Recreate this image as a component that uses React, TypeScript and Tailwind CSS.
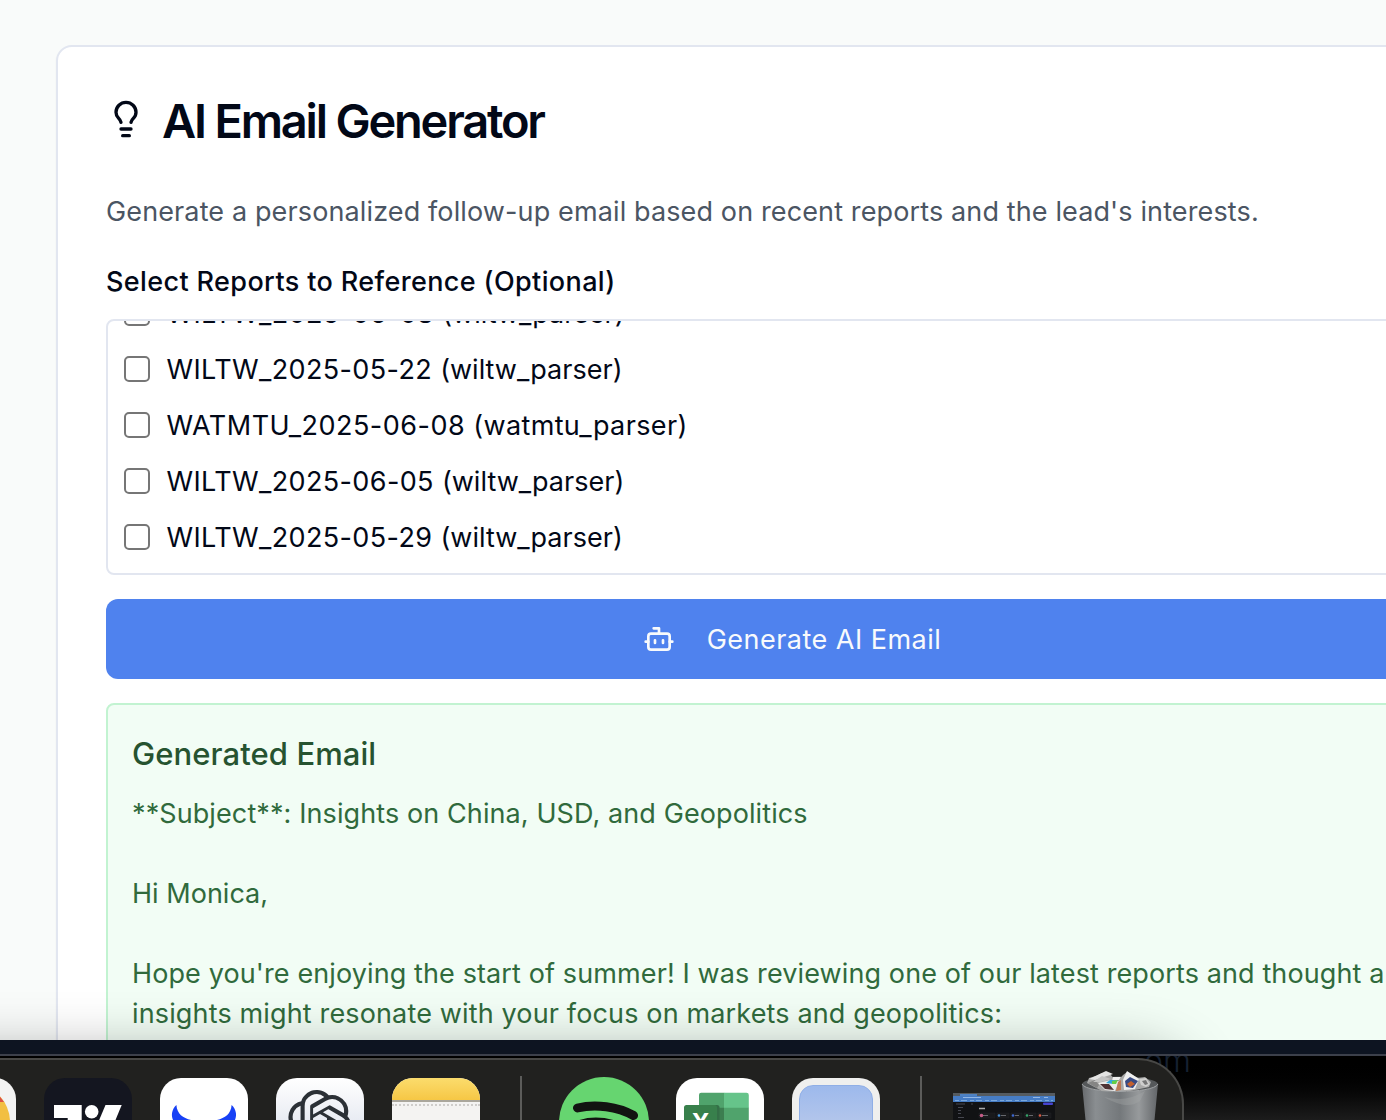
import type { ReactNode } from "react";
import { SiOpenai } from "react-icons/si";

const reports = [
  { name: "WILTW_2025-06-08", parser: "(wiltw_parser)", head: "tracking-[0.38px]", tail: "tracking-[0.02px]" },
  { name: "WILTW_2025-05-22", parser: "(wiltw_parser)", head: "tracking-[0.38px]", tail: "tracking-[0.02px]" },
  { name: "WATMTU_2025-06-08", parser: "(watmtu_parser)", head: "tracking-[0.48px]", tail: "tracking-[0.38px]" },
  { name: "WILTW_2025-06-05", parser: "(wiltw_parser)", head: "tracking-[0.38px]", tail: "tracking-[0.02px]" },
  { name: "WILTW_2025-05-29", parser: "(wiltw_parser)", head: "tracking-[0.38px]", tail: "tracking-[0.02px]" },
];

const emailLines = [
  { text: "**Subject**: Insights on China, USD, and Geopolitics", spacing: "tracking-[0.1px]" },
  { text: "", spacing: "" },
  { text: "Hi Monica,", spacing: "tracking-[0.02px]" },
  { text: "", spacing: "" },
  {
    text: "Hope you're enjoying the start of summer! I was reviewing one of our latest reports and thought a",
    spacing: "tracking-[0.11px]",
  },
  { text: "insights might resonate with your focus on markets and geopolitics:", spacing: "tracking-[0.145px]" },
];

function BulbIcon() {
  return (
    <svg width="40" height="40" viewBox="0 0 24 24" fill="none" stroke="currentColor" strokeWidth="2" strokeLinecap="round" strokeLinejoin="round" className="-mt-[2px] shrink-0">
      <path d="M15 14c.2-1 .7-1.7 1.5-2.5 1-.9 1.5-2.2 1.5-3.5A6 6 0 0 0 6 8c0 1 .2 2.2 1.5 3.5.7.7 1.3 1.5 1.5 2.5" />
      <path d="M9 18h6" />
      <path d="M10 22h4" />
    </svg>
  );
}

function BotIcon() {
  return (
    <svg width="32" height="32" viewBox="0 0 24 24" fill="none" stroke="currentColor" strokeWidth="2" strokeLinecap="round" strokeLinejoin="round" className="shrink-0">
      <path d="M12 8V4H8" />
      <rect width="16" height="12" x="4" y="8" rx="2" />
      <path d="M2 14h2M20 14h2M15 13v2M9 13v2" />
    </svg>
  );
}

function Tile({ className = "", children }: { className?: string; children?: ReactNode }) {
  return <div className={`h-[42px] w-[88px] shrink-0 overflow-hidden rounded-t-[21px] ${className}`}>{children}</div>;
}

function Separator({ className = "" }: { className?: string }) {
  return <div className={`h-[44px] w-[2px] shrink-0 bg-[#5c5c5a] ${className}`} />;
}

function Dock() {
  return (
    <div className="relative flex h-[62px] w-[1184px] items-end overflow-hidden rounded-tr-[46px] border-t-2 border-r-2 border-[#484846] bg-[#21211f]">
      <Tile className="-ml-[72px] bg-[#f3f3f2]">
        <svg width="88" height="42" viewBox="0 0 88 42">
          <circle cx="44" cy="44" r="38" fill="#f2bf42" />
          <path d="M44 6A38 38 0 0 1 76 24H44Z" fill="#dc5144" />
        </svg>
      </Tile>
      <Tile className="ml-[28px] bg-[#141620]">
        <svg width="88" height="42" viewBox="0 0 88 42" fill="#fff">
          <path d="M10 27h27.7v15h-14v-2H10z" />
          <circle cx="47.7" cy="33.7" r="6.8" />
          <path d="M61.5 27h16.2L71.5 42H55.2z" />
        </svg>
      </Tile>
      <Tile className="ml-[28px] bg-white">
        <svg width="88" height="42" viewBox="0 0 88 42" fill="#1841f5">
          <path d="M16.4 27C12 31 10.800 37 13 42H31C23 40 17 36 16.400 27Z" />
          <path d="M71.600 27C76 31 77.200 37 75 42H57C65 40 71 36 71.600 27Z" />
        </svg>
      </Tile>
      <Tile className="ml-[28px] bg-linear-to-b from-white to-[#e9ecf3]">
        <SiOpenai size={64} className="mt-[12px] ml-[12px] text-[#2b3036]" />
      </Tile>
      <Tile className="ml-[28px] bg-[#f4f3f2]">
        <div className="h-[22px] bg-linear-to-b from-[#fbdc6c] to-[#f6c744]" />
        <div className="h-[2px] bg-[#aaa69c]" />
        <div className="mt-[2px] border-t-2 border-dotted border-[#cfcdcb]" />
      </Tile>
      <Separator className="ml-[40px]" />
      <svg width="92" height="43" viewBox="0 0 92 43" fill="none" className="ml-[36px] shrink-0">
        <circle cx="46" cy="45" r="45" fill="#66d570" />
        <path d="M19.500 31C37 26.500 60 29.500 75.500 38.500" stroke="#121411" strokeWidth="9" strokeLinecap="round" />
        <path d="M22 47C36 42.500 51 44 68 52" stroke="#121411" strokeWidth="8" strokeLinecap="round" />
      </svg>
      <Tile className="ml-[26px] bg-white">
        <svg width="88" height="42" viewBox="0 0 88 42">
          <path d="M25.500 14.700H48.200V30H23V17a2.300 2.300 0 0 1 2.500-2.300z" fill="#50a36c" />
          <path d="M48 14.700H70.500A2.300 2.300 0 0 1 72.800 17V30H48z" fill="#66c48a" />
          <path d="M23 29.700H48V42H23z" fill="#3c7d50" />
          <path d="M48 29.700H72.800V42H48z" fill="#50a36c" />
          <path d="M23 27H41a2.500 2.500 0 0 1 2.500 2.500V42H23z" fill="#346f47" />
          <rect x="8" y="27" width="33" height="33" rx="2.500" fill="#38804c" />
          <text x="24.500" y="53" textAnchor="middle" fill="#fff" fontFamily="Open Sans, sans-serif" fontWeight="700" fontSize="25">X</text>
        </svg>
      </Tile>
      <Tile className="ml-[28px] bg-[#efefee] px-[7px] pt-[7px]">
        <div className="h-[60px] rounded-t-[14px] border border-[#8faee6] bg-linear-to-b from-[#9db9ec] to-[#c0cdea]" />
      </Tile>
      <Separator className="ml-[40px]" />
      <svg width="102" height="27" viewBox="0 0 102 27" className="ml-[31px] shrink-0">
        <rect width="102" height="27" fill="#111214" />
        <rect width="102" height="3" fill="#555b60" />
        <rect x="7" y="1" width="17" height="2" fill="#4e82c4" />
        <rect y="3" width="102" height="6" fill="#467cc4" />
        <path d="M10 4.500H28M80 4.500h7M91 4.500h4" stroke="#92b7e5" />
        <path d="M2 7.500H100" stroke="#7ba8dc" strokeDasharray="4 2 6 3" />
        <path d="M3 11h9M18 11h2M5 14.500h5M5 17.500h3M5 20.500h3M5 24.500h6" stroke="#464750" />
        <rect x="90" y="9.500" width="10" height="2.500" rx="1" fill="#4644d0" />
        <path d="M26 15.500h6" stroke="#aaa" strokeWidth="1.500" />
        <g fill="#18191b" stroke="#222326" strokeWidth=".5">
          <rect x="26" y="20" width="16" height="5" /><rect x="44" y="20" width="12" height="5" />
          <rect x="58" y="20" width="11" height="5" /><rect x="71" y="20" width="12" height="5" />
          <rect x="85" y="20" width="13" height="5" />
        </g>
        <path d="M48 22.500h5M62 22.500h4M76 22.500h4M89 22.500h6M30 22.500h5" stroke="#66676c" />
        <circle cx="28.500" cy="22.500" r="1.800" fill="#c55b87" />
        <circle cx="46" cy="22.500" r="1.300" fill="#438dd5" />
        <circle cx="60" cy="22.500" r="1.300" fill="#3c68d2" />
        <circle cx="74" cy="22.500" r="1.300" fill="#35a46a" />
        <circle cx="87" cy="22.500" r="1.300" fill="#d85a42" />
      </svg>
      <svg width="80" height="50" viewBox="0 0 80 50" className="ml-[25px] shrink-0">
        <defs>
          <linearGradient id="bin" x1="0" x2="1">
            <stop offset="0" stopColor="#686b6e" /><stop offset=".18" stopColor="#8a8e91" />
            <stop offset=".5" stopColor="#74787b" /><stop offset=".75" stopColor="#979a9c" /><stop offset="1" stopColor="#626568" />
          </linearGradient>
        </defs>
        <ellipse cx="40" cy="14" rx="38" ry="7.500" fill="#55585a" />
        <path d="M2 14C6 24 74 24 78 14L74.500 50H5.500Z" fill="url(#bin)" />
        <path d="M24 27C40 31 52 29 65 21L60 31C49 39 37 34 24 27Z" fill="#a5a8aa" opacity=".35" />
        <path d="M2 14C6 24 74 24 78 14" fill="none" stroke="#a0a3a5" />
        <path d="M7 13 9 8 16 6 22 3 30 4 37 12 43 5 47 2 58 8 65 7 71 12 69 17 50 21H22Z" fill="#a9a9a8" />
        <path d="M9 9 26 1 33 4 15 10Z" fill="#e4e4e3" />
        <path d="m33 7 8 0-2 3-7 1z" fill="#f0f0ef" />
        <path d="m8 13 7-3 4 5-2 3z" fill="#858584" />
        <path d="m13 12 9-6 9 3-10 3z" fill="#c4c4c3" />
        <path d="m18 13 13-3 8 1-4 10-10-1z" fill="#ecebea" />
        <path d="m20 14 9 0 5 6-9-1z" fill="#4f3436" />
        <path d="m26 13 4-3h7l-4 4z" fill="#35a9dc" />
        <path d="m32 11 6-1-2 4h-4z" fill="#65ce46" />
        <path d="m38 12 3-2v10l-5 1z" fill="#bf7853" />
        <path d="m43 10 4-9 12 8-4 10-11 1z" fill="#efefef" />
        <path d="m45 11 5-4 8 4-5 7-7-1z" fill="#394b83" />
        <path d="m47 14 4-3 4 3-5 3z" fill="#c4602e" />
        <path d="m59 9 7-1 4 6-4 3-5-2z" fill="#cfcfce" />
        <path d="m62 11 4-1 2 4-3 1z" fill="#777" />
      </svg>
    </div>
  );
}

export default function App() {
  return (
    <div className="flex h-[1120px] w-[1386px] flex-col overflow-hidden bg-[#f9fbfa] font-['Inter',sans-serif] text-[#020817] antialiased">
      <main className="relative h-[1040px] shrink-0 overflow-hidden pt-[45px] pl-[56px]">
        <section className="h-[1200px] w-[1472px] rounded-2xl border-2 border-[#e2e6f0] bg-white px-12 pt-[49px] shadow-xs">
          <div className="flex h-12 items-center">
            <BulbIcon />
            <h1 className="mt-[2px] ml-4 text-[47px] leading-[48px] font-semibold tracking-[-2.2px] whitespace-nowrap">AI Email Generator</h1>
          </div>
          <p className="mt-12 text-[27px] leading-[40px] tracking-[0.125px] whitespace-nowrap text-[#4b5563]">
            Generate a personalized follow-up email based on recent reports and the lead's interests.
          </p>
          <h2 className="mt-[30px] text-[27px] leading-[40px] font-medium tracking-[0.38px] whitespace-nowrap">Select Reports to Reference (Optional)</h2>
          <div className="mt-[17px] flex h-[256px] flex-col justify-end gap-4 overflow-hidden rounded-lg border-2 border-[#e2e6f0] px-4 pb-[15px]">
            {reports.map((r) => (
              <label key={r.name} className="flex h-10 shrink-0 items-center gap-4">
                <input type="checkbox" className="-mt-0.5 size-[26px] shrink-0 appearance-none rounded-[5px] border-2 border-[#767676] bg-white" />
                <span className="pl-[0.5px] text-[27px] leading-[40px] whitespace-nowrap">
                  <span className={r.head}>{r.name} </span>
                  <span className={r.tail}>{r.parser}</span>
                </span>
              </label>
            ))}
          </div>
          <button className="mt-6 flex h-20 w-full items-center justify-center gap-8 rounded-xl bg-[#4f82ee] text-[27px] tracking-[0.48px] text-[#f8fafc]">
            <BotIcon />
            <span className="pt-[2px]">Generate AI Email</span>
          </button>
          <div className="mt-6 h-[500px] rounded-lg border-2 border-[#c2f3d1] bg-[#f2fdf5] px-6 pt-[25px]">
            <h3 className="text-[31px] leading-[48px] font-medium tracking-[0.08px] text-[#265330]">Generated Email</h3>
            <div className="mt-4 text-[27px] text-[#306a3c]">
              {emailLines.map((line, i) => (
                <p key={i} className={`h-10 leading-[40px] whitespace-nowrap ${line.spacing}`}>{line.text}</p>
              ))}
            </div>
          </div>
        </section>
        <div className="pointer-events-none absolute top-[1058px] -left-[200px] h-[100px] w-[1384px] rounded-[46px] shadow-[0_0_60px_rgba(0,0,0,0.42)]" />
      </main>
      <footer className="h-20 shrink-0">
        <div className="h-[14px] bg-[#0d1421]" />
        <div className="h-[2px] bg-[#3c404b]" />
        <div className="relative h-[64px] overflow-hidden bg-linear-to-b from-black to-[#1c1c1c] pt-[2px]">
          <span className="absolute top-[-15px] left-[1144px] text-[32px] leading-[40px] font-light text-[#162131]">om</span>
          <Dock />
        </div>
      </footer>
    </div>
  );
}
